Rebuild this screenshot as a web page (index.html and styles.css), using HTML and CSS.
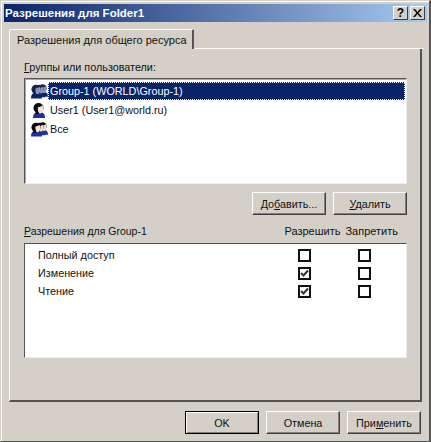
FILE: index.html
```html
<!DOCTYPE html>
<html lang="ru">
<head>
  <meta charset="UTF-8" />
  <title>Разрешения для Folder1</title>
  <link rel="stylesheet" href="styles.css">
</head>
<body>
  <svg class="defs" width="0" height="0">
    <defs>
      <symbol id="head" viewBox="0 0 12 15">
        <path class="body" d="M0 15c0-3 1-5 3-5.500h6c2 .5 3 2.500 3 5.500z"/>
        <circle class="hair" cx="5.500" cy="5" r="5"/>
        <path class="hair" d="M1 5h5v6H3z"/>
        <path class="face" d="M5 4c1 0 3-.5 4.500-1.500C10.500 4 10.500 6 10 7.500 9.500 9.500 8 11 6.500 10.500 5 9.500 4.500 6 5 4z"/>
      </symbol>
    </defs>
  </svg>

  <div class="window">
    <div class="titlebar">
      <span class="title">Разрешения для Folder1</span>
      <div class="title-btns">
        <span class="title-btn">?</span>
        <span class="title-btn">
          <svg width="9" height="8" viewBox="0 0 9 8"><path d="M0 0h2l2.500 3L7 0h2L5.500 4 9 8H7L4.500 5 2 8H0l3.500-4z" fill="#000"/></svg>
        </span>
      </div>
    </div>

    <div class="tabs">
      <div class="tab">Разрешения для общего ресурса</div>
      <div class="tab-rest"></div>
    </div>

    <div class="pane">
      <div class="label"><u>Г</u>руппы или пользователи:</div>
      <div class="list">
        <div class="row selected">
          <svg class="icon" width="17" height="16" viewBox="0 0 17 16"><use href="#head" x="7" y="1" width="10" height="13"/><use href="#head" x="4" y="1" width="10" height="14"/><use href="#head" x="0" y="1" width="11" height="15"/></svg>
          <span class="row-text">Group-1 (WORLD\Group-1)</span>
        </div>
        <div class="row">
          <svg class="icon" width="17" height="16" viewBox="0 0 17 16"><use href="#head" x="2" y="1" width="12" height="15"/></svg>
          <span class="row-text">User1 (User1@world.ru)</span>
        </div>
        <div class="row">
          <svg class="icon" width="17" height="16" viewBox="0 0 17 16"><use href="#head" x="7" y="1" width="10" height="13"/><use href="#head" x="4" y="1" width="10" height="14"/><use href="#head" x="0" y="1" width="11" height="15"/></svg>
          <span class="row-text">Все</span>
        </div>
      </div>

      <div class="list-btns">
        <button class="btn">До<u>б</u>авить...</button>
        <button class="btn"><u>У</u>далить</button>
      </div>

      <div class="perm-head">
        <span class="perm-name"><u>Р</u>азрешения для Group-1</span>
        <span class="perm-col">Разрешить</span>
        <span class="perm-col">Запретить</span>
      </div>
      <div class="perm-list">
        <div class="perm-row">
          <span class="perm-name">Полный доступ</span>
          <span class="perm-cell"><span class="check"></span></span>
          <span class="perm-cell"><span class="check"></span></span>
        </div>
        <div class="perm-row">
          <span class="perm-name">Изменение</span>
          <span class="perm-cell"><span class="check"><svg width="9" height="9" viewBox="0 0 9 9"><path d="M1 4l2.500 2.500L8 1.500" stroke="#333" stroke-width="2" fill="none"/></svg></span></span>
          <span class="perm-cell"><span class="check"></span></span>
        </div>
        <div class="perm-row">
          <span class="perm-name">Чтение</span>
          <span class="perm-cell"><span class="check"><svg width="9" height="9" viewBox="0 0 9 9"><path d="M1 4l2.500 2.500L8 1.500" stroke="#333" stroke-width="2" fill="none"/></svg></span></span>
          <span class="perm-cell"><span class="check"></span></span>
        </div>
      </div>
    </div>

    <div class="footer">
      <button class="btn btn-default">OK</button>
      <button class="btn">Отмена</button>
      <button class="btn">При<u>м</u>енить</button>
    </div>
  </div>
</body>
</html>
```

FILE: styles.css
```css
* {
  box-sizing: border-box;
}

body {
  margin: 0;
  background: #d4d0c8;
  font-family: "Liberation Sans", Arial, sans-serif;
  font-size: 10.800px;
  color: #111;
}

.defs {
  display: block;
  height: 0;
}

.body {
  fill: var(--body, #1c2f9c);
}

.hair {
  fill: var(--hair, #0a0a0a);
}

.face {
  fill: var(--face, #f4e4d0);
}

.window {
  width: 431px;
  height: 442px;
  padding: 3px 1px 0 3px;
  background: #d4d0c8;
  border-top: 1px solid #d4d0c8;
  border-left: 1px solid #d4d0c8;
  border-right: 2px solid #555;
  border-bottom: 1px solid #555;
  box-shadow: inset 1px 1px 0 #fff;
}

.titlebar {
  height: 18px;
  margin-right: 1px;
  padding: 0 2px 0 1px;
  display: flex;
  align-items: center;
  justify-content: space-between;
  background: linear-gradient(to right, #0a246a, #a6caf0);
}

.title {
  color: #fff;
  font-weight: bold;
  font-size: 11.500px;
}

.title-btns {
  display: flex;
  gap: 2px;
}

.title-btn {
  width: 15px;
  height: 14px;
  display: flex;
  align-items: center;
  justify-content: center;
  background: #d4d0c8;
  border: 1px solid;
  border-color: #fff #404040 #404040 #fff;
  color: #000;
  font-weight: bold;
  font-size: 12px;
}

.tabs {
  display: flex;
  height: 20px;
  margin: 7px 0 0 5px;
}

.tab {
  width: 185px;
  padding: 4px 0 0 7px;
  font-size: 11px;
  background: #d4d0c8;
  border-top: 1px solid #fff;
  border-left: 1px solid #fff;
  border-right: 2px solid #555;
  border-radius: 2px 2px 0 0;
}

.tab-rest {
  flex: 1;
  border-bottom: 1px solid #fff;
  margin-right: 4px;
}

.pane {
  width: 413px;
  height: 353px;
  margin-left: 5px;
  padding: 12px 13px 0 14px;
  border-left: 1px solid #fff;
  border-right: 2px solid #555;
  border-bottom: 2px solid #555;
}

.label {
  height: 17px;
}

.list {
  height: 106px;
  padding: 2px 1px;
  background: #fff;
  border: 1px solid;
  border-color: #555 #eee #eee #555;
  box-shadow: inset 1px 1px 0 #aaa;
}

.row {
  height: 19.300px;
  padding-left: 5px;
  display: flex;
  align-items: center;
}

.icon {
  flex: none;
}

.row-text {
  flex: 1;
  height: 18px;
  padding-left: 2px;
  line-height: 18px;
}

.selected .icon {
  --body: #0a246a;
  --hair: #1a2548;
  --face: #8a96b8;
}

.selected .row-text {
  background: #0a246a;
  color: #fff;
  outline: 1px dotted #fff;
  outline-offset: -1px;
}

.list-btns {
  display: flex;
  justify-content: flex-end;
  gap: 7px;
  margin-top: 8px;
}

.btn {
  width: 74px;
  height: 23px;
  padding: 0;
  background: #d4d0c8;
  border: 1px solid;
  border-color: #fff #404040 #404040 #fff;
  box-shadow: inset -1px -1px 0 #808080;
  font: inherit;
  color: inherit;
}

.btn-default {
  border: 1px solid #000;
  box-shadow: inset 1px 1px 0 #fff, inset -1px -1px 0 #808080;
}

.perm-head {
  display: flex;
  align-items: center;
  gap: 5px;
  height: 16px;
  margin-top: 8px;
  margin-bottom: 4px;
  padding-right: 9px;
  font-size: 10.500px;
}

.perm-name {
  flex: 1;
}

.perm-col {
  font-size: 11px;
}

.perm-list {
  height: 115px;
  padding: 2px 14px 0 13px;
  background: #fff;
  border: 1px solid;
  border-color: #555 #eee #eee #555;
}

.perm-row {
  display: flex;
  align-items: center;
  height: 18px;
}

.perm-cell {
  width: 60px;
  padding-left: 14px;
  display: flex;
}

.perm-cell:last-child {
  width: 48px;
}

.check {
  width: 13px;
  height: 13px;
  display: flex;
  align-items: center;
  justify-content: center;
  background: #fff;
  border: 2px solid #111;
}

.footer {
  display: flex;
  justify-content: flex-end;
  gap: 7px;
  margin: 9px 7px 0 0;
}
```
